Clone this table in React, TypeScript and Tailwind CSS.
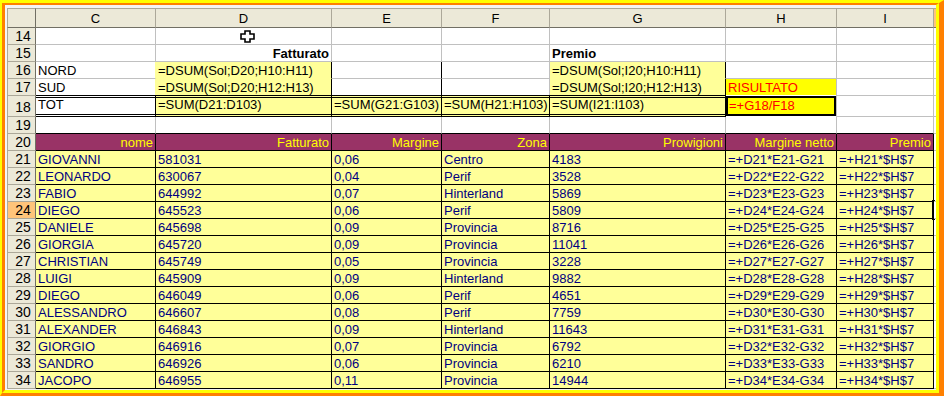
import React from 'react';

const W = ['w-[120px]', 'w-[176px]', 'w-[110px]', 'w-[108px]', 'w-[176px]', 'w-[111px]', 'w-[97px]'];

const BASE = 'shrink-0 flex leading-[15px] whitespace-nowrap overflow-hidden';

function Cell({ w, cls, children }: { w: string; cls: string; children?: React.ReactNode }) {
  return <div className={`${w} ${BASE} ${cls}`}>{children}</div>;
}

function RowHead({ n, cls = 'border-b border-b-[#aca899]', hi = false }: { n: number; cls?: string; hi?: boolean }) {
  return (
    <div
      className={`w-[29px] shrink-0 flex items-end justify-center pl-[3px] text-[14px] leading-[15px] border-l border-r border-l-[#aca899] border-r-[#716f64] ${
        hi ? 'bg-[#ffc47a]' : 'bg-[#ece9d8]'
      } ${cls}`}
    >
      {n}
    </div>
  );
}

const WHITE = 'items-end pl-[2px] bg-white border-r border-b';
const GR = 'border-r-[#c0c0c0]';
const GB = 'border-b-[#c0c0c0]';
const KR = 'border-r-black';
const KB = 'border-b-black';
const YR = 'border-r-[#ffff99]';
const YB = 'border-b-[#ffff99]';

const DATA: [string, string, string, string, string][] = [
  ['GIOVANNI', '581031', '0,06', 'Centro', '4183'],
  ['LEONARDO', '630067', '0,04', 'Perif', '3528'],
  ['FABIO', '644992', '0,07', 'Hinterland', '5869'],
  ['DIEGO', '645523', '0,06', 'Perif', '5809'],
  ['DANIELE', '645698', '0,09', 'Provincia', '8716'],
  ['GIORGIA', '645720', '0,09', 'Provincia', '11041'],
  ['CHRISTIAN', '645749', '0,05', 'Provincia', '3228'],
  ['LUIGI', '645909', '0,09', 'Hinterland', '9882'],
  ['DIEGO', '646049', '0,06', 'Perif', '4651'],
  ['ALESSANDRO', '646607', '0,08', 'Perif', '7759'],
  ['ALEXANDER', '646843', '0,09', 'Hinterland', '11643'],
  ['GIORGIO', '646916', '0,07', 'Provincia', '6792'],
  ['SANDRO', '646926', '0,06', 'Provincia', '6210'],
  ['JACOPO', '646955', '0,11', 'Provincia', '14944'],
];

const DCELL = 'items-end pl-[2px] bg-[#ffff99] text-[#000080] border-r border-b border-r-black border-b-black';
const HCELL = 'items-end justify-end pr-[2px] bg-[#993366] text-[#ffff00] border-r border-b border-r-black border-b-black';
const JCELL = 'items-end bg-white border-b border-b-[#c0c0c0]';

function BlankRow({ n }: { n: number }) {
  return (
    <div className="flex h-[17px]">
      <RowHead n={n} />
      {W.map((w, i) => (
        <Cell key={i} w={w} cls={`${WHITE} ${GR} ${GB}`} />
      ))}
      <Cell w="w-[2px]" cls={JCELL} />
    </div>
  );
}

function Plus() {
  return (
    <svg width="15" height="13" viewBox="0 0 15 13" className="absolute left-[238px] top-[27px]">
      <polygon
        points="5,1 10,1 10,4 14,4 14,9 10,9 10,12 5,12 5,9 1,9 1,4 5,4"
        fill="white"
        stroke="black"
        strokeWidth="1.6"
        strokeLinejoin="miter"
      />
    </svg>
  );
}

export default function App() {
  const headers = ['nome', 'Fatturato', 'Margine', 'Zona', 'Prowigioni', 'Margine netto', 'Premio'];
  return (
    <div className="relative w-[944px] h-[396px] overflow-hidden font-['Liberation_Sans',Arial,sans-serif] text-[13px] text-black border-t-[3px] border-l-[2px] border-r-[5px] border-b-[3px] border-t-[#ffff00] border-l-[#ffff00] border-r-[#ff8000] border-b-[#ff8000]">
      <div className="h-full border-t-[2px] border-l-[3px] border-r-[3px] border-b-[3px] border-t-[#ff8000] border-l-[#ff8000] border-r-[#ffff00] border-b-[#ffff00]">
        <div className="h-full bg-[#f4f4f4] pt-[3px] pl-[2px] pb-[1px] overflow-hidden">
          <div className="flex flex-col w-[929px] overflow-hidden">
            {/* Column header */}
            <div className="flex h-[20px]">
              <div className="w-[29px] shrink-0 bg-[#ece9d8] border border-t-[#aca899] border-l-[#aca899] border-r-[#716f64] border-b-[#716f64]" />
              {['C', 'D', 'E', 'F', 'G', 'H', 'I'].map((l, i) => (
                <div
                  key={l}
                  className={`${W[i]} shrink-0 flex items-center justify-center leading-[15px] bg-[#ece9d8] border-t border-r border-b border-t-[#aca899] border-r-[#aca899] border-b-[#716f64]`}
                >
                  {l}
                </div>
              ))}
              <div className="w-[2px] shrink-0 bg-[#ffc47a] border-t border-b border-t-[#aca899] border-b-[#716f64]" />
            </div>

            <BlankRow n={14} />

            {/* Row 15 */}
            <div className="flex h-[17px]">
              <RowHead n={15} />
              <Cell w={W[0]} cls={`${WHITE} ${GR} ${GB}`} />
              <Cell w={W[1]} cls={`items-end justify-end pr-[2px] font-bold bg-white border-r border-b ${GR} ${GB}`}>
                Fatturato
              </Cell>
              <Cell w={W[2]} cls={`${WHITE} ${GR} ${GB}`} />
              <Cell w={W[3]} cls={`${WHITE} ${GR} ${GB}`} />
              <Cell w={W[4]} cls={`${WHITE} font-bold ${GR} ${GB}`}>
                Premio
              </Cell>
              <Cell w={W[5]} cls={`${WHITE} ${GR} ${GB}`} />
              <Cell w={W[6]} cls={`${WHITE} ${GR} ${GB}`} />
              <Cell w="w-[2px]" cls={JCELL} />
            </div>

            {/* Row 16 */}
            <div className="flex h-[17px]">
              <RowHead n={16} />
              <Cell w={W[0]} cls={`${WHITE} ${YR} ${GB}`}>NORD</Cell>
              <Cell w={W[1]} cls={`items-end pl-[2px] bg-[#ffff99] border-r border-b ${KR} ${YB}`}>
                =DSUM(Sol;D20;H10:H11)
              </Cell>
              <Cell w={W[2]} cls={`${WHITE} ${KR} ${GB}`} />
              <Cell w={W[3]} cls={`${WHITE} ${GR} ${GB}`} />
              <Cell w={W[4]} cls={`items-end pl-[2px] bg-[#ffff99] border-r border-b ${KR} ${YB}`}>
                =DSUM(Sol;I20;H10:H11)
              </Cell>
              <Cell w={W[5]} cls={`${WHITE} ${GR} ${GB}`} />
              <Cell w={W[6]} cls={`${WHITE} ${GR} ${GB}`} />
              <Cell w="w-[2px]" cls={JCELL} />
            </div>

            {/* Row 17 */}
            <div className="flex h-[16px]">
              <RowHead n={17} cls="" />
              <Cell w={W[0]} cls={`items-end pl-[2px] bg-white border-r ${YR}`}>SUD</Cell>
              <Cell w={W[1]} cls={`items-end pl-[2px] bg-[#ffff99] border-r ${KR}`}>=DSUM(Sol;D20;H12:H13)</Cell>
              <Cell w={W[2]} cls={`items-end bg-white border-r ${KR}`} />
              <Cell w={W[3]} cls={`items-end bg-white border-r ${GR}`} />
              <Cell w={W[4]} cls={`items-end pl-[2px] bg-[#ffff99] border-r ${KR}`}>=DSUM(Sol;I20;H12:H13)</Cell>
              <Cell w={W[5]} cls={`items-end pl-[2px] bg-[#ffff00] text-[#ff0000] border-r ${GR}`}>RISULTATO</Cell>
              <Cell w={W[6]} cls={`items-end bg-white border-r ${GR}`} />
              <Cell w="w-[2px]" cls="bg-white" />
            </div>

            {/* Row 18 */}
            <div className="flex h-[22px]">
              <RowHead n={18} cls="border-t border-b border-t-[#aca899] border-b-[#aca899] pb-[1px]" />
              <Cell w={W[0]} cls="items-end pl-[2px] pb-[2px] bg-white border-double border-y-[3px] border-r border-black">
                TOT
              </Cell>
              <Cell w={W[1]} cls="items-end pl-[2px] pb-[2px] bg-[#ffff99] border-double border-y-[3px] border-r border-black">
                =SUM(D21:D103)
              </Cell>
              <Cell w={W[2]} cls="items-end pl-[2px] pb-[2px] bg-[#ffff99] border-double border-y-[3px] border-r border-black">
                =SUM(G21:G103)
              </Cell>
              <Cell w={W[3]} cls="items-end pl-[2px] pb-[2px] bg-[#ffff99] border-double border-y-[3px] border-r border-black">
                =SUM(H21:H103)
              </Cell>
              <Cell w={W[4]} cls="items-end pl-[2px] pb-[2px] bg-[#ffff99] border-double border-y-[3px] border-r border-black">
                =SUM(I21:I103)
              </Cell>
              <Cell w={W[5]} cls={`items-stretch py-px bg-white border-r ${GR}`}>
                <div className="flex-1 flex items-end pl-[1px] pb-[1px] bg-[#ffff00] text-[#ff0000] border-2 border-black leading-[15px]">
                  =+G18/F18
                </div>
              </Cell>
              <Cell w={W[6]} cls={`items-end bg-white border-t border-r border-b border-t-[#c0c0c0] ${GR} ${GB}`} />
              <Cell w="w-[2px]" cls="bg-white border-t border-b border-t-[#c0c0c0] border-b-[#c0c0c0]" />
            </div>

            {/* Row 19 */}
            <div className="flex h-[17px]">
              <RowHead n={19} />
              {W.map((w, i) => (
                <Cell key={i} w={w} cls={`${WHITE} ${GR} ${KB}`} />
              ))}
              <Cell w="w-[2px]" cls={JCELL} />
            </div>

            {/* Row 20 header */}
            <div className="flex h-[17px]">
              <RowHead n={20} />
              {headers.map((h, i) => (
                <Cell key={i} w={W[i]} cls={HCELL}>
                  {h}
                </Cell>
              ))}
              <Cell w="w-[2px]" cls={JCELL} />
            </div>

            {DATA.map((d, idx) => {
              const n = 21 + idx;
              return (
                <div key={n} className="flex h-[17px]">
                  <RowHead n={n} hi={n === 24} />
                  <Cell w={W[0]} cls={DCELL}>{d[0]}</Cell>
                  <Cell w={W[1]} cls={DCELL}>{d[1]}</Cell>
                  <Cell w={W[2]} cls={DCELL}>{d[2]}</Cell>
                  <Cell w={W[3]} cls={DCELL}>{d[3]}</Cell>
                  <Cell w={W[4]} cls={DCELL}>{d[4]}</Cell>
                  <Cell w={W[5]} cls={DCELL}>{`=+D${n}*E${n}-G${n}`}</Cell>
                  <Cell w={W[6]} cls={DCELL}>{`=+H${n}*$H$7`}</Cell>
                  <Cell w="w-[2px]" cls={JCELL} />
                </div>
              );
            })}
          </div>
        </div>
      </div>
      <Plus />
      <div className="absolute left-[930px] top-[197px] w-[3px] h-[20px] border-l-2 border-t border-b border-black" />
    </div>
  );
}
